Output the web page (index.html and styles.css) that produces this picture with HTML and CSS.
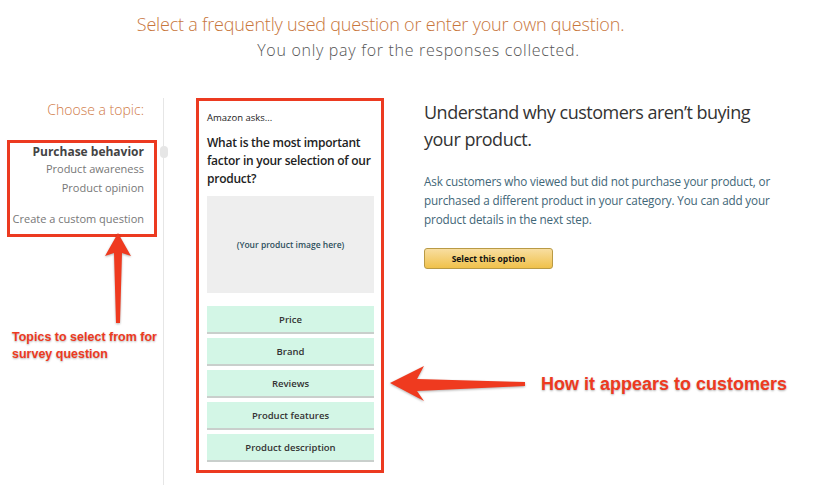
FILE: index.html
```html
<!DOCTYPE html>
<html>
<head>
<meta charset="utf-8">
<link rel="stylesheet" href="styles.css">
</head>
<body>
<div class="page">
  <header class="intro">
    <h1 class="intro-title">Select a frequently used question or enter your own question.</h1>
    <p class="intro-sub">You only pay for the responses collected.</p>
  </header>
  <main class="main">
    <aside class="topics">
      <div class="topics-label">Choose a topic:</div>
      <ul class="topic-list">
        <li class="topic topic-active">Purchase behavior</li>
        <li class="topic topic-aware">Product awareness</li>
        <li class="topic topic-opinion">Product opinion</li>
        <li class="topic topic-custom">Create a custom question</li>
      </ul>
      <span class="topic-nub"></span>
      <p class="note note-left">Topics to select from for survey question</p>
    </aside>
    <section class="preview">
      <div class="preview-asks">Amazon asks...</div>
      <div class="preview-q">What is the most important factor in your selection of our product?</div>
      <div class="preview-img">(Your product image here)</div>
      <div class="answers">
        <div class="answer">Price</div>
        <div class="answer">Brand</div>
        <div class="answer">Reviews</div>
        <div class="answer">Product features</div>
        <div class="answer">Product description</div>
      </div>
    </section>
    <section class="detail">
      <h2 class="detail-title">Understand why customers aren’t buying your product.</h2>
      <p class="detail-text">Ask customers who viewed but did not purchase your product, or purchased a different product in your category. You can add your product details in the next step.</p>
      <button class="select-btn">Select this option</button>
      <p class="note note-right">How it appears to customers</p>
    </section>
  </main>
  <svg class="arrow arrow-up" width="40" height="100" viewBox="0 0 40 100">
    <path d="M18 2 L31 25 L22 22 L20 92 L16 92 L14 22 L5 25 Z" fill="#ef3a1f"/>
  </svg>
  <svg class="arrow arrow-left" width="150" height="44" viewBox="0 0 150 44">
    <path d="M5 20 L39 3 L32 16 L140 19 L140 23 L32 28 L39 38 Z" fill="#ef3a1f"/>
  </svg>
</div>
</body>
</html>
```
FILE: styles.css
```css
* { box-sizing: border-box; }
html, body { margin: 0; padding: 0; background: #fff; }
body { font-family: "Open Sans", "Liberation Sans", sans-serif; color: #333; }
.page { position: relative; width: 837px; height: 485px; overflow: hidden; }

.intro { text-align: center; padding-top: 12px; }
.intro-title { margin: 0; padding-right: 76px; font-size: 18px; line-height: 24px; font-weight: 300; color: #c8763c; letter-spacing: -0.2px; }
.intro-sub { margin: 4px 0 0; font-size: 16px; line-height: 20px; font-weight: 300; color: #555; letter-spacing: 0.7px; }

.main { display: flex; margin-top: 38px; height: 388px; }

.topics { position: relative; width: 164px; border-right: 1px solid #e6e6e6; padding-top: 2px; flex: none; }
.topics-label { text-align: right; padding-right: 19px; font-size: 14px; line-height: 20px; color: #d07a46; font-weight: 300; }
.topic-list { list-style: none; margin: 20px 0 0 7px; padding: 0 10px 6px 0; width: 150px; border: 3px solid #ec3a20; text-align: right; }
.topic { font-size: 11px; line-height: 18px; color: #777; white-space: nowrap; }
.topic-active { font-weight: 700; color: #444; font-size: 12px; }
.topic-aware { margin-top: -1px; }
.topic-opinion { margin-top: 1px; }
.topic-custom { margin-top: 13px; }
.topic-nub { position: absolute; right: -5px; top: 48px; width: 8px; height: 12px; border-radius: 4px; background: #e6e6e6; }

.note { margin: 0; font-family: "Liberation Sans", Arial, sans-serif; font-weight: 700; color: #ee3a1f; text-shadow: 0 1px 2px rgba(0,0,0,0.3), 0 0 2px #fff; }
.note-left { margin: 92px 0 0 12px; font-size: 12.5px; line-height: 17px; width: 150px; }

.preview { flex: none; margin-left: 32px; width: 188px; height: 375px; border: 3px solid #ec3a20; padding: 10px 7px 7px 8px; display: flex; flex-direction: column; }
.preview-asks { font-size: 9.5px; line-height: 14px; color: #222; }
.preview-q { margin-top: 9px; font-size: 12px; line-height: 18px; font-weight: 600; color: #222; letter-spacing: -0.25px; }
.preview-img { margin-top: 8px; height: 97px; background: #eeeeee; display: flex; align-items: center; justify-content: center; font-size: 8.5px; font-weight: 600; color: #2d4f5c; }
.answers { margin-top: 13px; display: flex; flex-direction: column; gap: 4px; }
.answer { height: 28px; background: #d3f6e6; border-bottom: 2px solid #c9cfcc; display: flex; align-items: center; justify-content: center; font-size: 9.5px; font-weight: 600; color: #333; }

.detail { flex: none; margin-left: 40px; width: 370px; padding-top: 1px; }
.detail-title { margin: 0; font-size: 18px; line-height: 27px; font-weight: 400; color: #333; width: 340px; letter-spacing: -0.5px; }
.detail-text { margin: 19px 0 0; font-size: 11.7px; line-height: 19px; color: #3f6677; width: 360px; letter-spacing: -0.15px; }
.select-btn { display: block; margin-top: 19px; width: 129px; height: 21px; padding: 0; border: 1px solid #b99a45; border-radius: 3px; background: linear-gradient(#f8dea0, #f0c14b); font-family: "Open Sans", sans-serif; font-size: 8.5px; font-weight: 700; color: #111; }
.note-right { margin: 105px 0 0 117px; font-size: 18px; line-height: 20px; white-space: nowrap; }

.arrow { position: absolute; filter: drop-shadow(0 1px 1px rgba(0,0,0,0.3)); }
.arrow-up { left: 100px; top: 231px; }
.arrow-left { left: 385px; top: 363px; }
```
